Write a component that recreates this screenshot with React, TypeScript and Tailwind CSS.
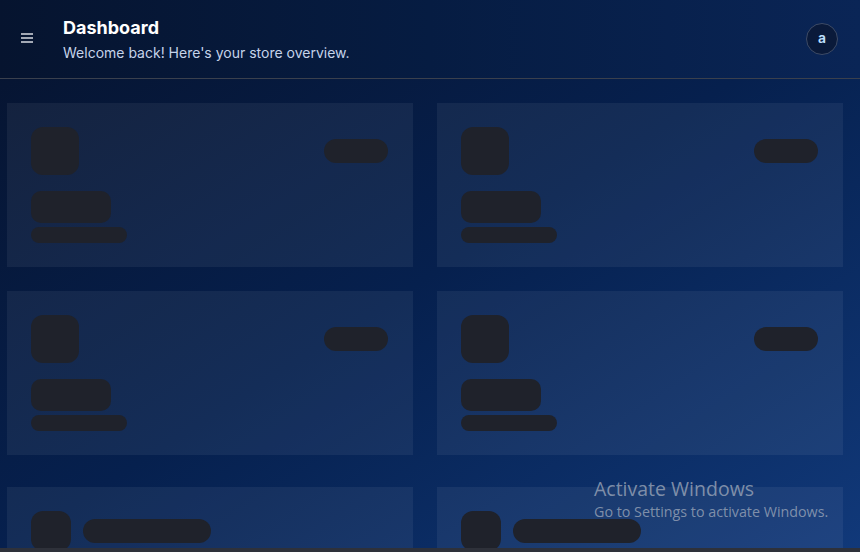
import React from "react";

const Skel = ({ className }: { className: string }) => (
  <div className={`bg-[#1f222b] ${className}`} />
);

const StatCard = () => (
  <div className="bg-white/[0.06] h-[164px] p-6 flex flex-col">
    <div className="flex justify-between items-start">
      <Skel className="w-12 h-12 rounded-xl" />
      <Skel className="w-16 h-6 rounded-full mt-3 mr-[1px]" />
    </div>
    <Skel className="w-20 h-8 rounded-[10px] mt-4" />
    <Skel className="w-24 h-4 rounded-full mt-1" />
  </div>
);

const ListCard = () => (
  <div className="bg-white/[0.06] h-[120px] p-6">
    <div className="flex items-center gap-3">
      <Skel className="w-10 h-10 rounded-xl" />
      <Skel className="w-32 h-6 rounded-full" />
    </div>
  </div>
);

const App = () => {
  return (
    <div
      className="relative h-[552px] w-[860px] overflow-hidden flex flex-col bg-gradient-to-br from-[#06132e] via-[#06204e] to-[#11397a]"
      style={{ fontFamily: "Inter, 'Liberation Sans', sans-serif" }}
    >
      {/* header */}
      <header className="h-[79px] shrink-0 border-b border-[#3a404d] flex items-center pl-[21px] pr-[22px] bg-gradient-to-r from-[#06142f] via-[#061c42] to-[#0a2556]">
        <div className="w-3 flex flex-col gap-[2px] mt-[-2px]">
          <span className="block h-[2px] bg-[#a3a9b5]" />
          <span className="block h-[2px] bg-[#a3a9b5]" />
          <span className="block h-[2px] bg-[#a3a9b5]" />
        </div>
        <div className="ml-[30px] flex flex-col mt-[1px]">
          <h1 className="text-white font-bold text-[18px] leading-6">Dashboard</h1>
          <p className="text-[#c5d3ea] text-[14px] leading-5 mt-[3px]">
            Welcome back! Here's your store overview.
          </p>
        </div>
        <div className="ml-auto w-8 h-8 rounded-full border border-[#3d4b66] bg-[#0a1a3a] flex items-center justify-center text-[#bfe0ff] text-[14px] font-semibold leading-none pb-[2px]">
          a
        </div>
      </header>

      {/* content */}
      <main className="flex-1 overflow-hidden pl-[7px] pr-[17px] pt-6">
        <div className="grid grid-cols-2 gap-6">
          <StatCard />
          <StatCard />
          <StatCard />
          <StatCard />
        </div>
        <div className="grid grid-cols-2 gap-6 mt-8">
          <ListCard />
          <ListCard />
        </div>
      </main>
      <div className="h-1 shrink-0 bg-[#2e313a]" />

      {/* windows watermark */}
      <div
        className="absolute left-[594px] top-[479px] text-[#9aa5b8]/80 leading-none"
        style={{ fontFamily: "'Open Sans', 'Noto Sans', sans-serif" }}
      >
        <div className="text-[19.5px]">Activate Windows</div>
        <div className="text-[14.3px] mt-[6px]">Go to Settings to activate Windows.</div>
      </div>
    </div>
  );
};

export default App;
